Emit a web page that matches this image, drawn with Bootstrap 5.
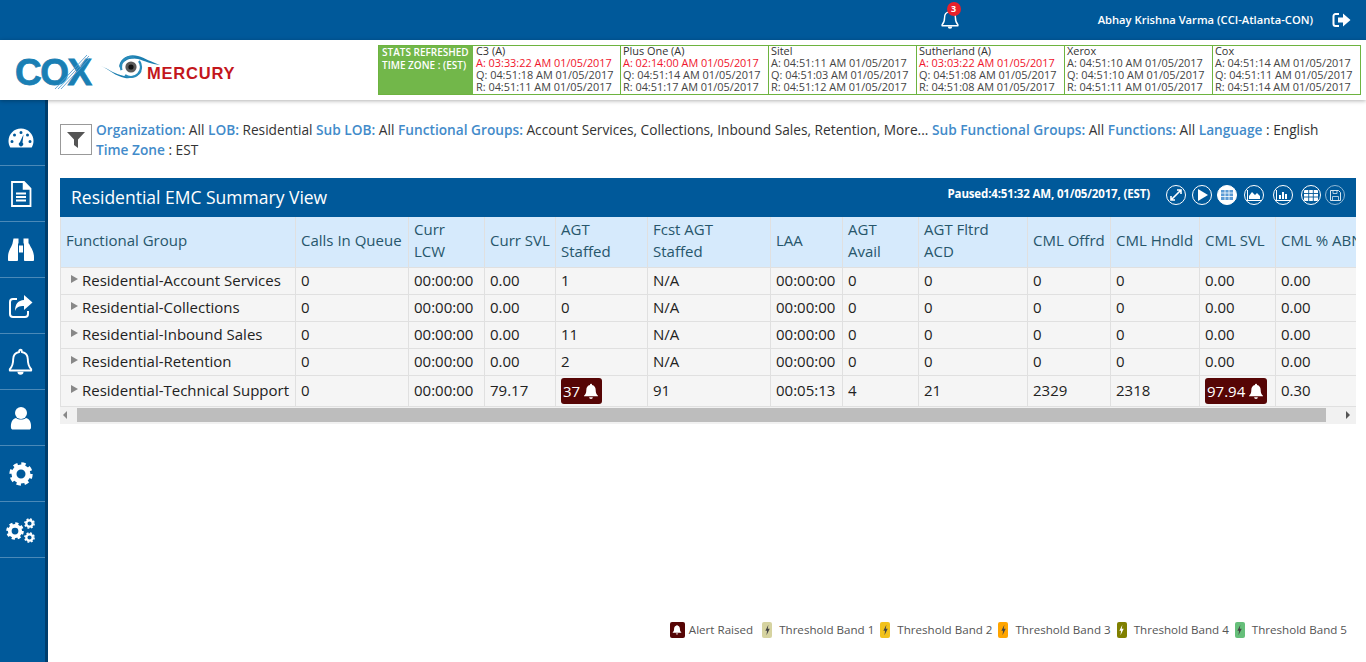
<!DOCTYPE html>
<html lang="en"><head><meta charset="utf-8"><title>Residential EMC Summary View</title>
<link href="https://cdn.jsdelivr.net/npm/bootstrap@5.3.0/dist/css/bootstrap.min.css" rel="stylesheet">
<style>
html,body{height:662px;overflow:hidden}
body{font-family:"Open Sans","Liberation Sans",sans-serif;background:#fff;color:#333}
.defs-holder{position:absolute;width:0;height:0}
.topbar{height:40px;background:#00599a;color:#fff}
.bellwrap{position:relative;width:24px;height:24px;margin-right:134px;margin-top:-5px}
.bellcount{position:absolute;left:7px;top:-4px;width:14px;height:14px;border-radius:50%;background:#e8212b;font-size:9px;font-weight:700;line-height:14px;text-align:center;color:#fff}
.username{font-size:11.2px;font-weight:600;margin-right:19px}
.logout{margin-right:15px}
.brandbar{height:60px;background:#fff;box-shadow:0 1px 4px rgba(0,0,0,.3);position:relative;z-index:2}
.coxmark{font-family:"Liberation Sans",sans-serif;font-weight:700;font-size:37px;letter-spacing:-1.5px;-webkit-text-stroke:.8px #1a7fb4;color:#1a7fb4;line-height:1;position:relative;margin:14px 0 0 15px;width:75px;height:36px}
.coxlines{position:absolute;left:39px;top:0}
.mercwrap{margin:13px 0 0 10px;position:relative;width:136px;height:34px}
.merceye{position:absolute;left:1px;top:0}
.mercword{position:absolute;left:47px;top:12px;font-family:"Liberation Sans",sans-serif;font-weight:700;font-size:16.5px;line-height:16px;color:#c3161c;letter-spacing:.8px}
.stats{margin-left:auto;margin-right:5px;margin-top:5px;height:50px;display:flex;border:1px solid #6db33f;width:983px;font-size:10.9px;line-height:12px;color:#444}
.statlead{width:94px;flex:none;background:#72b74a;color:#fff;font-weight:600;padding:0 0 0 3px;white-space:nowrap;font-size:10px;line-height:12.5px}
.statcell{width:148px;flex:none;border-left:1px solid #6db33f;padding:0 0 0 2px;white-space:nowrap;margin-top:-1px}
.statlead + .statcell{width:147px;border-left:0;padding-left:3px}
.statcell .late{color:#f0142c}
.statname{color:#333}
.sidebar{width:48px;background:#00599a;border-right:3px solid #003e6d;height:562px;padding-top:10px;flex:none}
.sideitem{height:56px;border-bottom:1px solid #4a89b8;display:flex;align-items:center;justify-content:center;padding-right:4px;color:#fff}
.mainarea{flex:1;min-width:0;padding:24px 10px 0 12px;position:relative}
.filterline{display:flex;gap:4px;font-size:13.7px;line-height:20px;height:54px}
.filterbtn{width:32px;height:31px;border:1px solid #999;display:flex;align-items:center;justify-content:center;flex:none}
.filtertxt{transform:translateY(-4px);white-space:nowrap}
.filtertxt b{color:#428bca;font-weight:600}
.emcpanel{width:1296px}
.emchead{height:39px;background:#00599a;color:#fff;display:flex;align-items:center;padding-left:11px}
.emctitle{font-size:17.5px;flex:1;font-weight:500}
.paused{font-size:11.5px;font-weight:700;letter-spacing:-.15px;margin-right:10px;margin-top:-7px}
.roundbtns{display:flex;margin-right:11px;margin-top:-5px}
.rbtn{width:20px;height:20px;border-radius:50%;border:1px solid #fff;display:flex;align-items:center;justify-content:center;flex:none;margin-left:6px}
.rbtn.on{background:#fff;margin-left:5px}
.rbtn.area{margin-left:7px}
.rbtn.bars{margin-left:9px}
.rbtn.cells{margin-left:8px}
.rbtn.dim{border-color:#a9c8df;opacity:.85;margin-left:4px}
.gridclip{overflow:hidden;width:1296px}
.emctable{table-layout:fixed;border-collapse:collapse;width:1306px;margin:0;font-size:15px;color:#222}
.emctable th{background:#d6eafc;color:#27566b;font-weight:400;line-height:22px;padding:0 5px 3px;height:50px;border:1px solid #e0e0e0;border-top:0;vertical-align:middle}
.emctable td{background:#f5f5f5;padding:0 5px 2px;height:27px;border:1px solid #e0e0e0;line-height:20px;vertical-align:middle;white-space:nowrap;color:#222}
.emctable tr.tall td{height:31px}
.emctable th:nth-child(1){width:235px}.emctable th:nth-child(2){width:113px}.emctable th:nth-child(3){width:76px}
.emctable th:nth-child(4){width:71px}.emctable th:nth-child(5){width:92px}.emctable th:nth-child(6){width:123px}
.emctable th:nth-child(7){width:72px}.emctable th:nth-child(8){width:76px}.emctable th:nth-child(9){width:109px}
.emctable th:nth-child(10){width:83px}.emctable th:nth-child(11){width:89px}.emctable th:nth-child(12){width:76px}
.emctable th:nth-child(13){width:91px;white-space:nowrap}
.caret{display:inline-block;width:0;height:0;border-left:7px solid #888;border-top:4.5px solid transparent;border-bottom:4.5px solid transparent;margin:0 4px 5px 5px;vertical-align:middle}
.alertchip{display:inline-flex;align-items:center;gap:3px;background:#560505;color:#fff;border-radius:3px;padding:0 3px 0 2px;height:26px;margin-top:2px}
.fakebar{height:17px;background:#f1f1f1;display:flex;align-items:center;padding:0 6px 0 3px}
.fakethumb{width:1249px;height:14px;background:#bdbdbd;margin-left:10px}
.arrowl{width:0;height:0;border-right:4px solid #888;border-top:4px solid transparent;border-bottom:4px solid transparent}
.arrowr{width:0;height:0;border-left:4px solid #555;border-top:4px solid transparent;border-bottom:4px solid transparent;margin-left:auto}
.legendrow{position:absolute;right:19px;top:521px;display:flex;align-items:center;font-size:11.6px;color:#555}
.swatch{width:10px;height:16px;border-radius:2px;display:flex;align-items:center;justify-content:center;flex:none;color:#444;margin:0 7px 0 6px}
.swatch.wide{width:15px;background:#560505;color:#fff;margin:0 4px 0 0}
.swatch.band0{margin-left:9px}
.band1{background:#d6d3a0}.band2{background:#f2c21c}.band3{background:#ffa500}.band4{background:#808000;color:#fff}.band5{background:#66bf7a}
</style></head>
<body>
<svg class="defs-holder">
<defs>
<symbol id="ic-bell" viewBox="0 0 24 24"><path d="M12 1.600c.7 0 1.200.5 1.200 1.200v.7c3.300.6 5.300 3.300 5.300 6.600 0 5.200 1.200 6.900 3 8.700v1.200H2.500v-1.200c1.800-1.800 3-3.500 3-8.700 0-3.300 2-6 5.300-6.600v-.7c0-.7.5-1.200 1.200-1.200z" fill="none" stroke="currentColor" stroke-width="1.700" stroke-linejoin="round"/><path d="M9.300 21a2.700 2.700 0 0 0 5.400 0z" fill="currentColor"/></symbol>
<symbol id="ic-bellfill" viewBox="0 0 24 24"><path d="M12 1c.9 0 1.500.6 1.500 1.400v.7c3.500.7 5.500 3.500 5.500 7 0 5.200 1.300 6.900 3.500 8.900v1H1.500v-1C3.700 17 5 15.300 5 10.100c0-3.500 2-6.300 5.500-7v-.7C10.500 1.600 11.100 1 12 1z" fill="currentColor"/><path d="M9.200 21.500a2.800 2.400 0 0 0 5.600 0z" fill="currentColor"/></symbol>
<symbol id="ic-gear" viewBox="0 0 24 24"><circle cx="12" cy="12" r="7" fill="none" stroke="currentColor" stroke-width="5"/><circle cx="12" cy="12" r="10" fill="none" stroke="currentColor" stroke-width="3.400" stroke-dasharray="4.300 3.550"/></symbol>
<symbol id="ic-bolt" viewBox="0 0 8 14"><path d="M5 1 1.500 8h2L2.800 13 6.600 5.500H4.300z" fill="currentColor"/></symbol>
</defs></svg>

<div class="topbar d-flex align-items-center justify-content-end">
  <div class="bellwrap"><svg width="20" height="22" class="text-white"><use href="#ic-bell"/></svg><span class="bellcount">3</span></div>
  <span class="username">Abhay Krishna Varma (CCI-Atlanta-CON)</span>
  <svg class="logout" width="19" height="16" viewBox="0 0 19 16"><path d="M7 2H3.500A2 2 0 0 0 1.500 4v8a2 2 0 0 0 2 2H7" fill="none" stroke="#fff" stroke-width="2"/><path d="M6 5.500h5V1.500L18.500 8 11 14.500v-4H6z" fill="#fff"/></svg>
</div>

<div class="brandbar d-flex align-items-start">
  <div class="coxmark">COX
    <svg width="36" height="36" viewBox="0 0 36 36" class="coxlines"><path d="M1 35 33 1M4 35 35 2M7 35 36 4" stroke="#5b9fd0" stroke-width=".9" fill="none"/></svg>
  </div>
  <div class="mercwrap">
    <svg width="60" height="30" viewBox="0 0 60 30" class="merceye">
      <path d="M0 13c8 3 13 8 23 10 7 1 13 0 18-5-3 5-10 8-17 7C14 23 9 17 0 13z" fill="#1c7fb0"/>
      <path d="M18 15C18 5 28 0 37 3c7 2 13 6 22 9-9-1-15-4-22-6-7-2-15 1-19 9z" fill="#1c7fb0"/>
      <circle cx="30" cy="14" r="10" fill="none" stroke="#2a8cbb" stroke-width="2.200" stroke-dasharray="22 6"/>
      <circle cx="30" cy="14" r="5.600" fill="#5a5a5a"/><circle cx="30" cy="14" r="2.600" fill="#111"/>
    </svg>
    <span class="mercword">MERCURY</span>
  </div>
  <div class="stats">
    <div class="statlead">STATS REFRESHED<br>TIME ZONE : (EST)</div>
    <div class="statcell"><div class="statname">C3 (A)</div><div class="late">A: 03:33:22 AM 01/05/2017</div><div>Q: 04:51:18 AM 01/05/2017</div><div>R: 04:51:11 AM 01/05/2017</div></div>
    <div class="statcell"><div class="statname">Plus One (A)</div><div class="late">A: 02:14:00 AM 01/05/2017</div><div>Q: 04:51:14 AM 01/05/2017</div><div>R: 04:51:17 AM 01/05/2017</div></div>
    <div class="statcell"><div class="statname">Sitel</div><div>A: 04:51:11 AM 01/05/2017</div><div>Q: 04:51:03 AM 01/05/2017</div><div>R: 04:51:12 AM 01/05/2017</div></div>
    <div class="statcell"><div class="statname">Sutherland (A)</div><div class="late">A: 03:03:22 AM 01/05/2017</div><div>Q: 04:51:08 AM 01/05/2017</div><div>R: 04:51:08 AM 01/05/2017</div></div>
    <div class="statcell"><div class="statname">Xerox</div><div>A: 04:51:10 AM 01/05/2017</div><div>Q: 04:51:10 AM 01/05/2017</div><div>R: 04:51:11 AM 01/05/2017</div></div>
    <div class="statcell"><div class="statname">Cox</div><div>A: 04:51:14 AM 01/05/2017</div><div>Q: 04:51:11 AM 01/05/2017</div><div>R: 04:51:14 AM 01/05/2017</div></div>
  </div>
</div>

<div class="d-flex">
  <nav class="sidebar">
    <div class="sideitem"><svg width="26" height="22" viewBox="0 0 26 22"><path fill-rule="evenodd" fill="#fff" d="M13 1.500C6 1.500.5 7 .5 14c0 2.500.7 4.600 1.800 6.500h21.400c1.100-1.900 1.800-4 1.800-6.500C25.500 7 20 1.500 13 1.500zM13 4a1.500 1.500 0 1 1 0 3 1.500 1.500 0 0 1 0-3zM6.500 6.500a1.500 1.500 0 1 1 0 3 1.500 1.500 0 0 1 0-3zM19.500 6.500a1.500 1.500 0 1 1 0 3 1.500 1.500 0 0 1 0-3zM4 13a1.500 1.500 0 1 1 0 3 1.500 1.500 0 0 1 0-3zM22 13a1.500 1.500 0 1 1 0 3 1.500 1.500 0 0 1 0-3zM15.500 7.500l-1 8a2.200 2.200 0 1 1-2.600-.2z"/></svg></div>
    <div class="sideitem"><svg width="22" height="26" viewBox="0 0 22 26"><path d="M2 1h12l6.500 6.500V25H2z" fill="none" stroke="#fff" stroke-width="1.800"/><path d="M13.500 1v7H21" fill="#fff" stroke="#fff" stroke-width="1.500"/><path d="M6 12.500h10M6 16h10M6 19.500h10" stroke="#fff" stroke-width="1.800"/></svg></div>
    <div class="sideitem"><svg width="26" height="25" viewBox="0 0 26 24"><path fill="#fff" d="M5.500 1h5v5h-.5v16.500c0 .5-.4 1-1 1H1c-.6 0-1-.5-1-1v-3C0 13 4 9 4.500 6zM15.500 1h5v5H21C22 9 26 13 26 19.500v3c0 .5-.4 1-1 1h-8c-.6 0-1-.5-1-1V6h-.5zM11 8h4v7h-4z"/></svg></div>
    <div class="sideitem"><svg width="25" height="24" viewBox="0 0 25 24"><path d="M9 5H5a3 3 0 0 0-3 3v12a3 3 0 0 0 3 3h12a3 3 0 0 0 3-3v-3" fill="none" stroke="#fff" stroke-width="2"/><path d="M16 1l8.500 7.500L16 16v-4c-5 0-7.500 1-9 5 0-7 3-10.500 9-11z" fill="#fff"/></svg></div>
    <div class="sideitem"><svg width="27" height="27"><use href="#ic-bell"/></svg></div>
    <div class="sideitem"><svg width="22" height="24" viewBox="0 0 22 24"><circle cx="11" cy="7" r="6" fill="#fff"/><path d="M1 22c-.5-5 1-9 5-10 3 2 7 2 10 0 4 1 5.500 5 5 10-.1.8-.8 1.500-2 1.500H3C1.800 23.500 1.100 22.800 1 22z" fill="#fff"/></svg></div>
    <div class="sideitem"><svg width="24" height="24"><use href="#ic-gear"/></svg></div>
    <div class="sideitem"><svg width="30" height="26" viewBox="0 0 30 26"><use href="#ic-gear" x="0" y="5" width="18" height="18"/><use href="#ic-gear" x="18" y="1" width="11" height="11"/><use href="#ic-gear" x="18" y="15" width="11" height="11"/></svg></div>
  </nav>
  <main class="mainarea">
    <div class="filterline">
      <div class="filterbtn"><svg width="18" height="18" viewBox="0 0 18 18"><path d="M0 1h18l-7 7.500V17l-4-3V8.500z" fill="#555"/></svg></div>
      <div class="filtertxt"><b>Organization:</b> All <b>LOB:</b> Residential <b>Sub LOB:</b> All <b>Functional Groups:</b> Account Services, Collections, Inbound Sales, Retention, More... <b>Sub Functional Groups:</b> All <b>Functions:</b> All <b>Language</b> : English<br><b>Time Zone</b> : EST</div>
    </div>
    <section class="emcpanel">
      <div class="emchead">
        <div class="emctitle">Residential EMC Summary View</div>
        <div class="paused">Paused:4:51:32 AM, 01/05/2017, (EST)</div>
        <div class="roundbtns">
          <span class="rbtn"><svg width="12" height="12" viewBox="0 0 12 12"><path d="M1 11 11 1M7 1h4v4M1 7v4h4" fill="none" stroke="#fff" stroke-width="1.600"/></svg></span>
          <span class="rbtn"><svg width="12" height="12" viewBox="0 0 12 12"><path d="M2 0v12l10-6z" fill="#fff"/></svg></span>
          <span class="rbtn on"><svg width="12" height="10" viewBox="0 0 12 10"><path d="M0 0h12v10H0z" fill="#5b9bd5"/><path d="M0 3h12M0 6.500h12M4 0v10M8 0v10" stroke="#fff" stroke-width=".8"/></svg></span>
          <span class="rbtn area"><svg width="14" height="11" viewBox="0 0 14 11"><path d="M0 0v11h14v-1H1V0z" fill="#fff"/><path d="M2 9V6l3-4 3 3 2-2 3 3v3z" fill="#fff"/></svg></span>
          <span class="rbtn bars"><svg width="14" height="11" viewBox="0 0 14 11"><path d="M0 0v11h14v-1H1V0z" fill="#fff"/><path d="M3 5h2v4H3zM6 2h2v7H6zM9 4h2v5H9z" fill="#fff"/></svg></span>
          <span class="rbtn cells"><svg width="14" height="11" viewBox="0 0 14 11"><rect width="14" height="11" rx="1" fill="#fff"/><path d="M0 3.500h14M0 7h14M4.700 0v11M9.300 0v11" stroke="#00599a" stroke-width=".9"/></svg></span>
          <span class="rbtn dim"><svg width="11" height="11" viewBox="0 0 11 11"><path d="M.5.500h8l2 2v8H.500z" fill="none" stroke="#fff"/><path d="M3 .500h4v3H3zM2.500 6.500h6v4h-6z" fill="none" stroke="#fff" stroke-width=".8"/></svg></span>
        </div>
      </div>
      <div class="gridclip">
      <table class="emctable">
        <thead><tr><th>Functional Group</th><th>Calls In Queue</th><th>Curr<br>LCW</th><th>Curr SVL</th><th>AGT<br>Staffed</th><th>Fcst AGT<br>Staffed</th><th>LAA</th><th>AGT<br>Avail</th><th>AGT Fltrd<br>ACD</th><th>CML Offrd</th><th>CML Hndld</th><th>CML SVL</th><th>CML % ABN</th></tr></thead>
        <tbody>
        <tr><td><i class="caret"></i>Residential-Account Services</td><td>0</td><td>00:00:00</td><td>0.00</td><td>1</td><td>N/A</td><td>00:00:00</td><td>0</td><td>0</td><td>0</td><td>0</td><td>0.00</td><td>0.00</td></tr>
        <tr><td><i class="caret"></i>Residential-Collections</td><td>0</td><td>00:00:00</td><td>0.00</td><td>0</td><td>N/A</td><td>00:00:00</td><td>0</td><td>0</td><td>0</td><td>0</td><td>0.00</td><td>0.00</td></tr>
        <tr><td><i class="caret"></i>Residential-Inbound Sales</td><td>0</td><td>00:00:00</td><td>0.00</td><td>11</td><td>N/A</td><td>00:00:00</td><td>0</td><td>0</td><td>0</td><td>0</td><td>0.00</td><td>0.00</td></tr>
        <tr><td><i class="caret"></i>Residential-Retention</td><td>0</td><td>00:00:00</td><td>0.00</td><td>2</td><td>N/A</td><td>00:00:00</td><td>0</td><td>0</td><td>0</td><td>0</td><td>0.00</td><td>0.00</td></tr>
        <tr class="tall"><td><i class="caret"></i>Residential-Technical Support</td><td>0</td><td>00:00:00</td><td>79.17</td><td><span class="alertchip">37 <svg width="16" height="16"><use href="#ic-bellfill"/></svg></span></td><td>91</td><td>00:05:13</td><td>4</td><td>21</td><td>2329</td><td>2318</td><td><span class="alertchip">97.94 <svg width="16" height="16"><use href="#ic-bellfill"/></svg></span></td><td>0.30</td></tr>
        </tbody>
      </table>
      </div>
      <div class="fakebar"><span class="arrowl"></span><span class="fakethumb"></span><span class="arrowr"></span></div>
    </section>
    <div class="legendrow">
      <span class="swatch wide"><svg width="10" height="11"><use href="#ic-bellfill"/></svg></span><span>Alert Raised</span>
      <span class="swatch band1 band0"><svg width="7" height="12"><use href="#ic-bolt"/></svg></span><span>Threshold Band 1</span>
      <span class="swatch band2"><svg width="7" height="12"><use href="#ic-bolt"/></svg></span><span>Threshold Band 2</span>
      <span class="swatch band3"><svg width="7" height="12"><use href="#ic-bolt"/></svg></span><span>Threshold Band 3</span>
      <span class="swatch band4"><svg width="7" height="12"><use href="#ic-bolt"/></svg></span><span>Threshold Band 4</span>
      <span class="swatch band5"><svg width="7" height="12"><use href="#ic-bolt"/></svg></span><span>Threshold Band 5</span>
    </div>
  </main>
</div>
<script src="https://cdn.jsdelivr.net/npm/bootstrap@5.3.0/dist/js/bootstrap.bundle.min.js"></script>
</body></html>
